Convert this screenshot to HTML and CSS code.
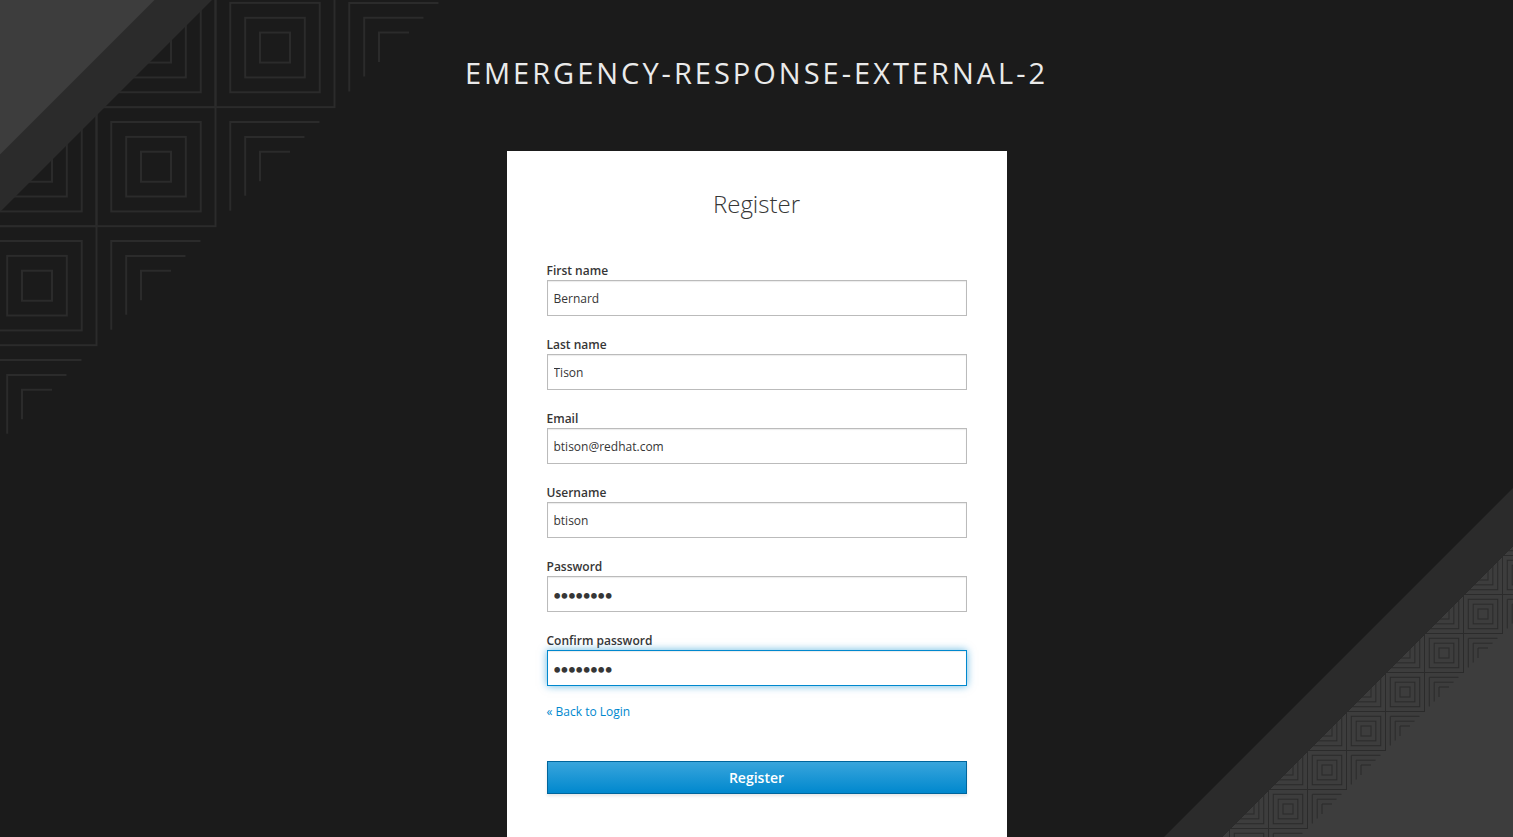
FILE: index.html
```html
<!DOCTYPE html>
<html lang="en">
<head>
<meta charset="utf-8">
<meta name="viewport" content="width=device-width, initial-scale=1">
<title>Register</title>
<link rel="stylesheet" href="styles.css">
</head>
<body class="page">
<svg class="backdrop backdrop-top" width="440" height="440" viewBox="0 0 440 440" aria-hidden="true">
  <defs>
    <g id="tile">
      <rect x="-59.5" y="-59.5" width="119" height="119"/>
      <rect x="-44.7" y="-44.7" width="89.4" height="89.4"/>
      <rect x="-29.8" y="-29.8" width="59.6" height="59.6"/>
      <rect x="-15" y="-15" width="30" height="30"/>
    </g>
    <g id="corner">
      <path d="M-44.7 44V-44.7H44.5M-29.8 29V-29.8H29.5M-15 14.5V-15H15"/>
    </g>
  </defs>
  <g class="lines-top">
    <use href="#tile" x="275" y="47.6"/>
    <use href="#tile" x="156" y="47.6"/>
    <use href="#tile" x="156" y="166.7"/>
    <use href="#tile" x="37" y="166.7"/>
    <use href="#tile" x="37" y="285.7"/>
    <use href="#corner" x="394" y="47.6"/>
    <use href="#corner" x="275" y="166.7"/>
    <use href="#corner" x="156" y="285.7"/>
    <use href="#corner" x="37" y="404.7"/>
  </g>
  <path class="band" d="M0 0H212L0 212Z"/>
  <path class="wedge" d="M0 0H154.500L0 154.500Z"/>
</svg>
<svg class="backdrop backdrop-bottom" width="349" height="349" viewBox="0 0 349 349" aria-hidden="true">
  <defs>
    <g id="small-tile">
      <rect x="-19.500" y="-19.500" width="39" height="39"/>
      <rect x="-14.700" y="-14.700" width="29.400" height="29.400"/>
      <rect x="-9.800" y="-9.800" width="19.600" height="19.600"/>
      <rect x="-5" y="-5" width="10" height="10"/>
    </g>
    <g id="small-corner">
      <path d="M-14.700 14.500V-14.700H14.500M-9.800 9.500V-9.800H9.500M-5 5V-5H5"/>
    </g>
  </defs>
  <path class="wedge" d="M349 58V349H58Z"/>
  <g class="lines-bottom">
    <use href="#small-tile" x="358" y="48"/>
    <use href="#small-tile" x="358" y="87"/>
    <use href="#small-tile" x="319" y="87"/>
    <use href="#small-tile" x="319" y="126"/>
    <use href="#small-tile" x="280" y="126"/>
    <use href="#small-tile" x="280" y="165"/>
    <use href="#small-tile" x="241" y="165"/>
    <use href="#small-tile" x="241" y="204"/>
    <use href="#small-tile" x="202" y="204"/>
    <use href="#small-tile" x="202" y="243"/>
    <use href="#small-tile" x="163" y="243"/>
    <use href="#small-tile" x="163" y="282"/>
    <use href="#small-tile" x="124" y="282"/>
    <use href="#small-tile" x="124" y="321"/>
    <use href="#small-tile" x="85" y="321"/>
    <use href="#small-tile" x="85" y="360"/>
    <use href="#small-corner" x="358" y="126"/>
    <use href="#small-corner" x="319" y="165"/>
    <use href="#small-corner" x="280" y="204"/>
    <use href="#small-corner" x="241" y="243"/>
    <use href="#small-corner" x="202" y="282"/>
    <use href="#small-corner" x="163" y="321"/>
    <use href="#small-corner" x="124" y="360"/>
  </g>
  <path class="mask" d="M0 0H349L0 349Z"/>
  <path class="band" d="M349 0V58L58 349H0Z"/>
</svg>
<header class="realm">Emergency-Response-External-2</header>
<main class="card">
  <h1 class="card-title">Register</h1>
  <form class="form">
    <div class="fields">
      <div class="field"><label class="label" for="first">First name</label><input class="input" id="first" type="text" value="Bernard"></div>
      <div class="field"><label class="label" for="last">Last name</label><input class="input" id="last" type="text" value="Tison"></div>
      <div class="field"><label class="label" for="email">Email</label><input class="input" id="email" type="text" value="btison@redhat.com"></div>
      <div class="field"><label class="label" for="user">Username</label><input class="input" id="user" type="text" value="btison"></div>
      <div class="field"><label class="label" for="pass">Password</label><input class="input input-secret" id="pass" type="password" value="password"></div>
      <div class="field"><label class="label" for="confirm">Confirm password</label><input class="input input-secret input-active" id="confirm" type="password" value="password"></div>
    </div>
    <a class="back" href="#">« Back to Login</a>
    <button class="submit" type="submit">Register</button>
  </form>
</main>
</body>
</html>
```
FILE: styles.css
```css
* {
  box-sizing: border-box;
}

.page {
  position: relative;
  display: flex;
  flex-direction: column;
  align-items: center;
  min-height: 100vh;
  margin: 0;
  background: #1b1b1b;
  color: #363636;
  font-family: "Open Sans", "Noto Sans", sans-serif;
  font-size: 12px;
  line-height: 20px;
}

.backdrop {
  position: absolute;
  z-index: -1;
}

.backdrop-top {
  top: 0;
  left: 0;
}

.backdrop-bottom {
  right: 0;
  bottom: 0;
}

.lines-top {
  fill: none;
  stroke: #2b2b2b;
  stroke-width: 2;
}

.lines-bottom {
  fill: none;
  stroke: #2b2b2b;
  stroke-width: 1;
}

.band {
  fill: #2b2b2b;
}

.wedge {
  fill: #3d3d3d;
}

.mask {
  fill: #1b1b1b;
}

.realm {
  padding: 54px 10px 59px;
  color: #eaeaea;
  font-size: 29px;
  line-height: 38px;
  letter-spacing: 3px;
  text-align: center;
  text-transform: uppercase;
}

.card {
  flex: 1;
  width: 100%;
  max-width: 500px;
  padding: 38px 40px 43px;
  background: #fff;
}

.card-title {
  margin: 0 0 43px;
  font-size: 24px;
  font-weight: 300;
  line-height: 30px;
  text-align: center;
}

.form,
.field {
  display: flex;
  flex-direction: column;
}

.fields {
  display: grid;
  gap: 20px;
}

.label {
  font-weight: 600;
  line-height: 18px;
}

.input {
  width: 100%;
  height: 36px;
  padding: 0 6px;
  border: 1px solid #bbb;
  border-radius: 0;
  background: #fff;
  box-shadow: inset 0 1px 1px rgba(3, 3, 3, 0.08);
  color: #363636;
  font: inherit;
}

.input-secret {
  padding-top: 4px;
  font-family: "Liberation Serif", serif;
  font-size: 21px;
  font-weight: 700;
}

.input-active,
.input:focus {
  border-color: #0088ce;
  outline: 0;
  box-shadow: inset 0 1px 1px rgba(3, 3, 3, 0.08), 0 0 8px rgba(0, 136, 206, 0.6);
}

.back {
  align-self: flex-start;
  margin: 16px 0 39px;
  color: #0088ce;
  text-decoration: none;
}

.submit {
  height: 33px;
  border: 1px solid #00659c;
  background: linear-gradient(#39a5dc, #0088ce);
  box-shadow: 0 2px 3px rgba(3, 3, 3, 0.1);
  color: #fff;
  font: inherit;
  font-size: 14px;
  font-weight: 600;
}
```
